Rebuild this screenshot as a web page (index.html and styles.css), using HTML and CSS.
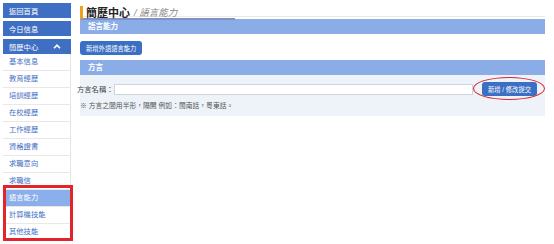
FILE: index.html
```html
<!DOCTYPE html>
<html lang="zh-TW">
<head>
  <meta charset="UTF-8">
  <title>簡歷中心 - 語言能力</title>
  <link rel="stylesheet" href="styles.css">
</head>
<body>
<div class="page">
  <!-- 左側選單 -->
  <aside class="sidebar">
    <a href="#" class="nav-main">返回首頁</a>
    <a href="#" class="nav-main">今日信息</a>
    <a href="#" class="nav-main nav-open">簡歷中心
      <svg class="chevron" width="8" height="5" viewBox="0 0 8 5"><polyline points="1,4.2 4,1.2 7,4.2" fill="none" stroke="#fff" stroke-width="1.6"/></svg>
    </a>
    <ul class="sub-nav">
      <li><a href="#">基本信息</a></li>
      <li><a href="#">教育經歷</a></li>
      <li><a href="#">培訓經歷</a></li>
      <li><a href="#">在校經歷</a></li>
      <li><a href="#">工作經歷</a></li>
      <li><a href="#">資格證書</a></li>
      <li><a href="#">求職意向</a></li>
      <li><a href="#">求職信</a></li>
      <li class="active"><a href="#">語言能力</a></li>
      <li><a href="#">計算機技能</a></li>
      <li><a href="#">其他技能</a></li>
    </ul>
    <div class="mark-box"></div>
  </aside>

  <!-- 主要內容 -->
  <main class="content">
    <div class="page-title">
      <span class="title-inner"><span class="title-main">簡歷中心</span><span class="title-sub">/ 語言能力</span></span>
    </div>

    <div class="section-bar">語言能力</div>
    <div class="section-body">
      <button class="btn">新增外語語言能力</button>
    </div>

    <div class="section-bar">方言</div>
    <div class="form-area">
      <div class="form-row">
        <label for="dialect">方言名稱：</label>
        <input type="text" id="dialect">
        <span class="btn-wrap">
          <button class="btn">新增 / 修改提交</button>
          <span class="mark-ring"></span>
        </span>
      </div>
      <p class="note">※ 方言之間用半形，隔開 例如：閩南話，粵東話。</p>
    </div>
  </main>
</div>
</body>
</html>
```

FILE: styles.css
```css
/* 全局樣式 */
* {
  margin: 0;
  padding: 0;
  box-sizing: border-box;
  font-family: "Liberation Sans", "Noto Sans CJK TC", sans-serif;
}

body {
  background: #fff;
  width: 554px;
  height: 244px;
  overflow: hidden;
}

.page {
  display: flex;
  padding: 3px 9px 0 3px;
}

/* 左側選單 */
.sidebar {
  position: relative;
  width: 68px;
  flex-shrink: 0;
}

.nav-main {
  display: flex;
  align-items: center;
  justify-content: space-between;
  height: 15px;
  margin-bottom: 3px;
  padding: 0 10px 0 6px;
  background-color: #3f6fc3;
  color: #fff;
  font-size: 7.3px;
  text-decoration: none;
}

.nav-open {
  margin-bottom: 0;
}

.chevron {
  display: block;
}

.sub-nav {
  list-style: none;
  border-right: 1px solid #e4e4e4;
}

.sub-nav li {
  height: 17px;
  border-bottom: 1px solid #e8e8e8;
}

.sub-nav a {
  display: block;
  line-height: 16px;
  padding-left: 6px;
  color: #3f6fc3;
  font-size: 7.3px;
  text-decoration: none;
}

.sub-nav .active {
  background-color: #8bafea;
}

.sub-nav .active a {
  color: #fff;
}

/* 標註框 */
.mark-box {
  position: absolute;
  left: 0;
  top: 182px;
  width: 70px;
  height: 56px;
  border: 3px solid #e3242b;
}

/* 主要內容 */
.content {
  flex: 1;
  margin-left: 9px;
}

.page-title {
  height: 14px;
  border-bottom: 1px solid #f1e6ea;
}

.title-inner {
  display: inline-flex;
  align-items: center;
  height: 14px;
  width: 155px;
  border-left: 3px solid #f0a020;
  border-bottom: 2px solid #7d94c2;
  padding-left: 3px;
}

.title-main {
  font-size: 11px;
  font-weight: bold;
  color: #222;
}

.title-sub {
  margin-left: 4px;
  font-size: 9.5px;
  font-style: italic;
  color: #888;
}

.section-bar {
  height: 15px;
  line-height: 15px;
  margin-top: 2px;
  padding-left: 8px;
  background-color: #8aade8;
  color: #fff;
  font-size: 7.5px;
  font-weight: bold;
}

.section-body {
  display: flex;
  padding: 7px 0 3px;
}

.btn {
  display: block;
  height: 14px;
  padding: 0 6px;
  background-color: #3b6fc4;
  color: #fff;
  border: none;
  border-radius: 3px;
  font-size: 6.3px;
  cursor: pointer;
}

.form-area {
  padding: 7px 0 6px;
  background-color: #eef3fa;
}

.form-row {
  display: flex;
  align-items: center;
  margin-left: -3px;
}

.form-row label {
  font-size: 7.3px;
  color: #444;
  white-space: nowrap;
}

.form-row input {
  flex: 1;
  height: 11px;
  margin-left: 1px;
  border: 1px solid #cfd4dc;
  background: #fff;
}

.btn-wrap {
  position: relative;
  margin: 0 8px 0 9px;
}

.btn-wrap .btn {
  width: 55px;
  padding: 0;
}

/* 標註圈 */
.mark-ring {
  position: absolute;
  left: -9px;
  top: -5px;
  width: 72px;
  height: 23px;
  border: 1.5px solid #d8272c;
  border-radius: 50%;
}

.note {
  margin-top: 5px;
  font-size: 6.8px;
  line-height: 9px;
  color: #555;
}
```
